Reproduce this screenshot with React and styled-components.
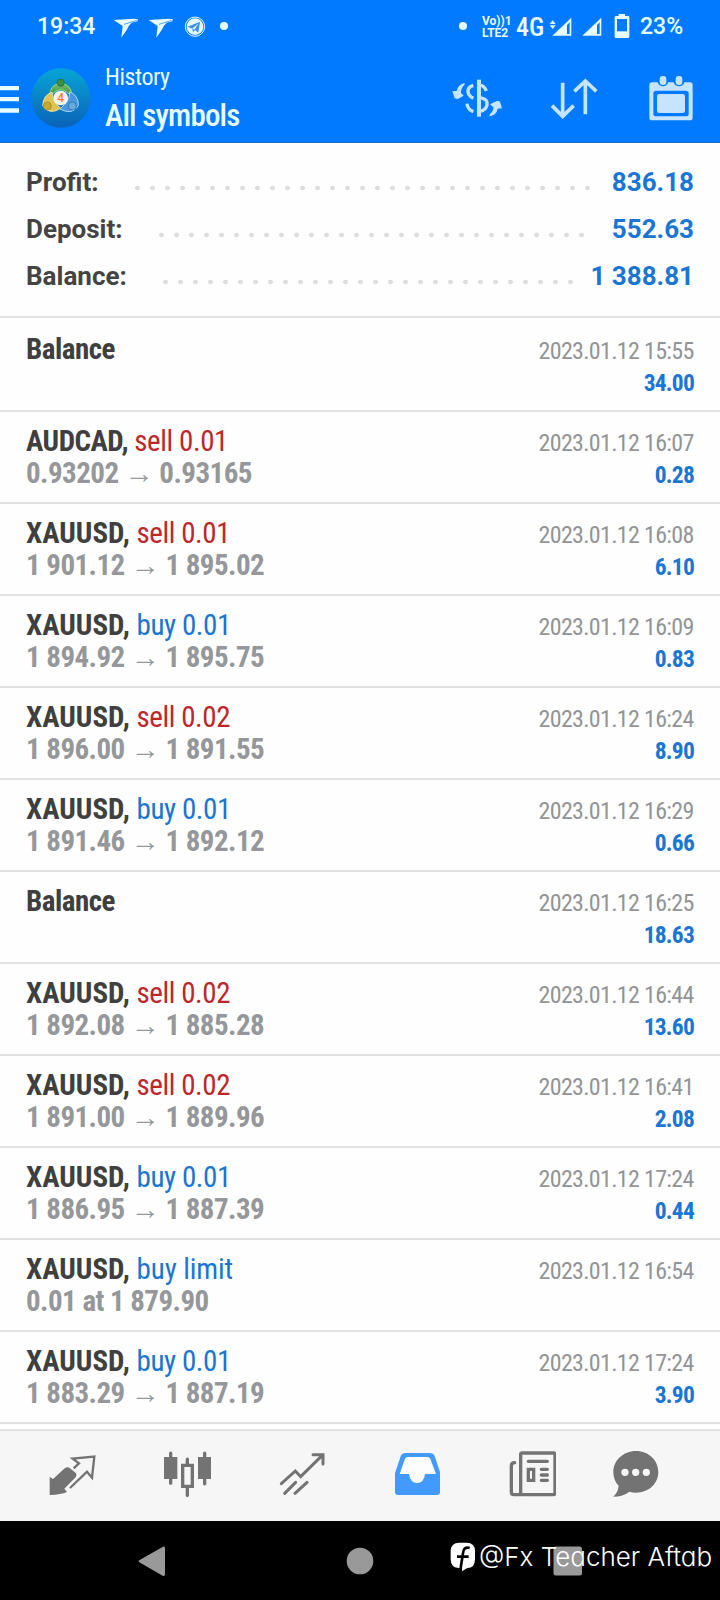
import React from "react";
import styled, { createGlobalStyle } from "styled-components";

const GlobalStyle = createGlobalStyle`
  * {
    box-sizing: border-box;
  }
  body {
    margin: 0;
    background: #fff;
    font-family: Roboto, sans-serif;
  }
  svg {
    display: block;
    flex: none;
  }
`;

const Screen = styled.div`
  width: 720px;
  height: 1600px;
  display: flex;
  flex-direction: column;
  overflow: hidden;
  background: #fefefe;
`;

const Header = styled.header`
  height: 143px;
  background: #017aff;
  border-bottom: 1px solid #1a70c4;
  color: #e8fbff;
`;

const StatusBar = styled.div`
  height: 54px;
  display: flex;
  align-items: center;
  padding-left: 37px;
`;

const Slot = styled.div`
  flex: none;
  width: ${(p) => p.$w}px;
  margin-left: ${(p) => p.$gap || 0}px;
  font-size: ${(p) => p.$size || 23}px;
  font-stretch: ${(p) => p.$stretch || 100}%;
  line-height: 32px;
  font-weight: 500;
  white-space: nowrap;
`;

const Volte = styled.div`
  flex: none;
  width: 28px;
  margin-left: 13px;
  font-size: 12px;
  font-weight: 700;
  line-height: 12px;
`;

const Toolbar = styled.div`
  height: 88px;
  display: flex;
  align-items: center;
`;

const Titles = styled.div`
  width: 345px;
  margin-left: 14px;
  padding-top: 3px;
  .section {
    font-size: 24px;
    line-height: 32px;
    font-stretch: 75%;
    letter-spacing: -0.45px;
  }
  .filter {
    font-size: 31px;
    line-height: 45px;
    font-weight: 480;
    font-stretch: 75%;
    letter-spacing: -0.8px;
  }
`;

const Summary = styled.section`
  height: 175px;
  padding: 15px 26px 0;
  border-bottom: 2px solid #e2e2e2;
`;

const SummaryLine = styled.div`
  height: 47px;
  display: flex;
  align-items: center;
  font-size: 26px;
  font-weight: 700;
  color: #444;
`;

const Dots = styled.div`
  width: ${(p) => p.$count * 15}px;
  height: 6px;
  margin: 12px auto 0 31px;
  background: radial-gradient(circle, #dedede 2px, transparent 2.7px) 0 0 / 15px 6px;
`;

const SummaryValue = styled.div`
  color: #1976d4;
`;

const Row = styled.article`
  height: 92px;
  flex: none;
  padding: 13px 26px 0;
  border-bottom: 2px solid #e2e2e2;
  &:first-child {
    height: 94px;
    padding-top: 15px;
  }
`;

const Line = styled.div`
  height: 32px;
  display: flex;
  justify-content: space-between;
  align-items: baseline;
  line-height: 32px;
  white-space: nowrap;
  font-stretch: 75%;
`;

const Name = styled.div`
  font-size: 29px;
  font-weight: 700;
  color: #3f3f3f;
  letter-spacing: ${(p) => (p.$tight ? "-0.5px" : "0")};
`;

const Action = styled.span`
  font-weight: 400;
  letter-spacing: ${(p) => (p.$limit ? "-0.1px" : "-0.42px")};
  color: ${(p) => (p.$sell ? "#bc282a" : "#1976d0")};
`;

const Price = styled.div`
  font-size: 29px;
  font-weight: 700;
  letter-spacing: -0.54px;
  color: #95979a;
`;

const DateText = styled.div`
  font-size: 24px;
  letter-spacing: -0.68px;
  margin-right: 0.4px;
  color: #929496;
`;

const Amount = styled.div`
  font-size: 23.5px;
  font-weight: 700;
  letter-spacing: -0.8px;
  color: #1976d4;
`;

const TabBar = styled.nav`
  height: 92px;
  margin-top: auto;
  flex: none;
  display: flex;
  gap: 67px;
  padding: 19px 0 0 48px;
  border-top: 2px solid #e2e2e2;
  background: #f6f6f6;
  svg:last-child {
    margin-left: -12px;
  }
`;

const SystemBar = styled.div`
  height: 79px;
  flex: none;
  position: relative;
  display: flex;
  align-items: center;
  background: #000;
`;

const Watermark = styled.div`
  position: absolute;
  left: 450px;
  top: 19px;
  display: flex;
  align-items: center;
  color: #fff;
  font-family: Inter, sans-serif;
  font-size: 26px;
  font-weight: 350;
  font-feature-settings: "cv11";
  line-height: 34px;
  white-space: nowrap;
  svg {
    margin-right: 3px;
  }
`;

const Bird = () => (
  <svg width="28" height="32" viewBox="336 33 84 96" fill="#e8fbff">
    <path d="M341 60 L400 56 L414 58 L412 64 L395 68 Q384 78 380 90 L364 113 L368 78 Z" />
    <path d="M372 73 L410 61" stroke="#017aff" strokeWidth="2" />
  </svg>
);

const Telegram = () => (
  <svg width="24" height="32" viewBox="550 33 72 96">
    <circle cx="586" cy="80" r="29" fill="none" stroke="#e8fbff" strokeWidth="3" />
    <circle cx="586" cy="80" r="25" fill="#e8fbff" />
    <path d="M564 80 L601 65 L596 98 L586 90 L580 97 L578 86 Z" fill="#3d8fe8" />
    <path d="M578 86 L597 70 L584 89 Z" fill="#e8fbff" />
  </svg>
);

const Dot = () => (
  <svg width="12" height="32" viewBox="0 0 12 32">
    <circle cx="6" cy="15" r="4" fill="#e8fbff" />
  </svg>
);

const Signal = ({ data }) => (
  <svg width="24" height="32" viewBox="360 33 72 96">
    <path d="M370 107 L427 53 V107 Z" fill="#e8fbff" />
    <path d="M414 75 L422 67 V102 H414 Z" fill="#017aff" />
    {data && (
      <path
        d="M362 72 L371 61 L380 72 Z M362 76 L371 87 L380 76 Z"
        fill="#e8fbff"
      />
    )}
  </svg>
);

const Battery = () => (
  <svg width="16" height="32" viewBox="551 33 48 96">
    <path d="M565 42 H584 V48 H593 Q597 48 597 52 V110 Q597 114 593 114 H557 Q553 114 553 110 V52 Q553 48 557 48 H565 Z" fill="#e8fbff" />
    <path d="M560 57 H590 V94 H560 Z" fill="#017aff" />
  </svg>
);

const Menu = () => (
  <svg width="19" height="60" viewBox="0 204 57 180" fill="#e8fbff">
    <path d="M0 258 H57 V271 H0 Z M0 291 H57 V304 H0 Z M0 325 H57 V338 H0 Z" />
  </svg>
);

const LogoDisc = styled.svg`
  margin-left: 12px;
`;

const Logo = () => (
  <LogoDisc width="60" height="60" viewBox="91 203 180 180">
    <defs>
      <linearGradient id="disc" x1="0" y1="0" x2="0" y2="1">
        <stop offset="0" stopColor="#08a4d6" />
        <stop offset="1" stopColor="#0b62b8" />
      </linearGradient>
      <linearGradient id="green" x1="0" y1="0" x2="0" y2="1">
        <stop offset="0" stopColor="#7fc070" />
        <stop offset="1" stopColor="#2e8a3e" />
      </linearGradient>
    </defs>
    <circle cx="181" cy="293" r="89" fill="url(#disc)" />
    <path
      d="M148 290 Q144 254 180 248 Q216 254 213 290 Q196 268 180 268 Q164 268 148 290 Z"
      fill="url(#green)"
      stroke="#a5d77a"
      strokeWidth="3"
    />
    <path
      d="M154 276 Q128 284 126 316 Q146 346 180 324 L168 312 Q154 296 154 276 Z"
      fill="#dfc452"
      stroke="#efe29a"
      strokeWidth="3"
    />
    <path
      d="M207 274 Q234 286 233 316 Q214 346 178 326 L192 312 Q208 296 207 274 Z"
      fill="#4a98dc"
      stroke="#a9d6f4"
      strokeWidth="3"
    />
    <circle cx="180" cy="247" r="11" fill="#3c8f3c" stroke="#1d6e3c" strokeWidth="2" />
    <circle cx="140" cy="317" r="12" fill="#c9a92c" stroke="#8a8433" strokeWidth="2" />
    <circle cx="215" cy="317" r="12" fill="#67aade" stroke="#2164a4" strokeWidth="2" />
    <circle cx="180" cy="293" r="22" fill="#f6f3ef" />
    <text x="180" y="306" fontSize="36" fontWeight="500" textAnchor="middle" fill="#ee7b3c">4</text>
  </LogoDisc>
);

const Currency = () => (
  <svg width="54" height="45" viewBox="60 225 162 135" fill="none" stroke="#c5e4ff" strokeWidth="10">
    <path d="M147 236 V347" strokeWidth="12" />
    <path d="M130 253 Q114 258 114 270 Q114 284 130 292" />
    <path d="M150 253 Q162 252 169 270 M150 290 Q174 294 171 312 Q168 328 150 331 M111 308 Q113 326 130 332" />
    <path d="M104 246 L103 253 Q92 262 93 276 L101 284 L84 294 L74 292 L67 271 L80 270 Q84 250 104 246 Z" fill="#c5e4ff" stroke="none" />
    <path d="M178 346 L180 339 Q191 330 190 319 L180 310 L202 299 L210 302 L216 322 L203 323 Q200 342 178 346 Z" fill="#c5e4ff" stroke="none" />
  </svg>
);

const Sort = () => (
  <svg width="48" height="45" viewBox="360 225 144 135" fill="none" stroke="#c5e4ff" strokeWidth="11">
    <path d="M398 245 V346 M366 314 L398 346 L431 314" />
    <path d="M466 340 V240 M433 271 L466 240 L499 271" />
  </svg>
);

const Calendar = () => (
  <svg width="46" height="45" viewBox="654 225 138 135" fill="#c5e4ff">
    <path
      fillRule="evenodd"
      d="M666 244 H683 Q687 256 699 256 Q711 256 714 244 H731 Q735 256 747 256 Q759 256 763 244 H780 Q788 244 788 252 V350 Q788 358 780 358 H666 Q658 358 658 350 V252 Q658 244 666 244 Z M679 269 Q670 269 670 277 V338 Q670 346 679 346 H767 Q776 346 776 338 V277 Q776 269 767 269 Z"
    />
    <rect x="689" y="225" width="20" height="27" rx="9" />
    <rect x="737" y="225" width="20" height="27" rx="9" />
    <rect x="681" y="279" width="84" height="57" rx="7" />
  </svg>
);

const TabIcon = ({ x, children }) => (
  <svg width="48" height="48" viewBox={`${x} 150 144 144`} fill="#737373">
    {children}
  </svg>
);

const rows = [
  { date: "15:55", amount: "34.00" },
  { symbol: "AUDCAD", side: "sell", size: "0.01", price: "0.93202 → 0.93165", date: "16:07", amount: "0.28" },
  { symbol: "XAUUSD", side: "sell", size: "0.01", price: "1 901.12 → 1 895.02", date: "16:08", amount: "6.10" },
  { symbol: "XAUUSD", side: "buy", size: "0.01", price: "1 894.92 → 1 895.75", date: "16:09", amount: "0.83" },
  { symbol: "XAUUSD", side: "sell", size: "0.02", price: "1 896.00 → 1 891.55", date: "16:24", amount: "8.90" },
  { symbol: "XAUUSD", side: "buy", size: "0.01", price: "1 891.46 → 1 892.12", date: "16:29", amount: "0.66" },
  { date: "16:25", amount: "18.63" },
  { symbol: "XAUUSD", side: "sell", size: "0.02", price: "1 892.08 → 1 885.28", date: "16:44", amount: "13.60" },
  { symbol: "XAUUSD", side: "sell", size: "0.02", price: "1 891.00 → 1 889.96", date: "16:41", amount: "2.08" },
  { symbol: "XAUUSD", side: "buy", size: "0.01", price: "1 886.95 → 1 887.39", date: "17:24", amount: "0.44" },
  { symbol: "XAUUSD", side: "buy", size: "limit", price: "0.01 at 1 879.90", date: "16:54" },
  { symbol: "XAUUSD", side: "buy", size: "0.01", price: "1 883.29 → 1 887.19", date: "17:24", amount: "3.90" },
];

const summary = [
  { label: "Profit:", value: "836.18", dots: 31 },
  { label: "Deposit:", value: "552.63", dots: 29 },
  { label: "Balance:", value: "1 388.81", dots: 28 },
];

const HistoryRow = ({ row }) => (
  <Row>
    <Line>
      <Name $tight={row.symbol !== "XAUUSD"}>
        {row.symbol ? `${row.symbol}, ` : "Balance"}
        {row.symbol && (
          <Action $sell={row.side === "sell"} $limit={row.size === "limit"}>
            {row.side} {row.size}
          </Action>
        )}
      </Name>
      <DateText>2023.01.12 {row.date}</DateText>
    </Line>
    <Line>
      {/* nbsp keeps the baseline on balance rows */}
      <Price>{row.price || "\u00a0"}</Price>
      <Amount>{row.amount}</Amount>
    </Line>
  </Row>
);

const App = () => {
  return (
    <>
      <GlobalStyle />
      <Screen>
        <Header>
          <StatusBar>
            <Slot $w={75}>19:34</Slot>
            <Slot $w={28}><Bird /></Slot>
            <Slot $w={28} $gap={7}><Bird /></Slot>
            <Slot $w={24} $gap={8}><Telegram /></Slot>
            <Slot $w={12} $gap={11}><Dot /></Slot>
            <Slot $w={12} $gap={227}><Dot /></Slot>
            <Volte>
              <div>Vo))1</div>
              <div>LTE2</div>
            </Volte>
            <Slot $w={30} $gap={6} $size={26} $stretch={85}>4G</Slot>
            <Slot $w={24} $gap={3}><Signal data /></Slot>
            <Slot $w={24} $gap={6}><Signal /></Slot>
            <Slot $w={16} $gap={11}><Battery /></Slot>
            <Slot $w={50} $gap={10} $stretch={95}>23%</Slot>
          </StatusBar>
          <Toolbar>
            <Menu />
            <Logo />
            <Titles>
              <div className="section">History</div>
              <div className="filter">All symbols</div>
            </Titles>
            <Slot $w={54}><Currency /></Slot>
            <Slot $w={48} $gap={46}><Sort /></Slot>
            <Slot $w={46} $gap={50}><Calendar /></Slot>
          </Toolbar>
        </Header>

        <Summary>
          {summary.map((item) => (
            <SummaryLine key={item.label}>
              <div>{item.label}</div>
              <Dots $count={item.dots} />
              <SummaryValue>{item.value}</SummaryValue>
            </SummaryLine>
          ))}
        </Summary>

        <main>
          {rows.map((row, i) => (
            <HistoryRow key={i} row={row} />
          ))}
        </main>

        <TabBar>
          <TabIcon x={145}>
            <path d="M150 231 L160 237 L196 204 Q205 199 211 205 L229 220 Q233 226 228 232 L194 266 L202 276 Q185 284 150 285 Z" />
            <path
              d="M222 205 L238 190 L219 176 L284 170 L277 233 L262 215 L211 264"
              fill="none"
              stroke="#737373"
              strokeWidth="7"
            />
          </TabIcon>
          <TabIcon x={489}>
            <path d="M507 158 Q512 151 517 158 V171 H532 V237 H517 V251 Q512 258 507 251 V237 H492 V171 H507 Z" />
            <path d="M609 158 Q614 151 619 158 V171 H633 V237 H619 V253 Q614 260 609 253 V237 H594 V171 H609 Z" />
            <path
              fillRule="evenodd"
              d="M557 176 Q562 169 567 176 V191 H582 V264 H567 V288 Q562 295 557 288 V264 H543 V191 H557 Z M553 201 V254 H572 V201 Z"
            />
          </TabIcon>
          <TabIcon x={834}>
            <path
              d="M844 251 L886 213 L902 230 L966 167 M939 164 H969 V192 M854 280 L887 247 M885 280 L921 247"
              fill="none"
              stroke="#737373"
              strokeWidth="9"
              strokeLinecap="round"
            />
          </TabIcon>
          <TabIcon x={99}>
            <path
              fill="#fdfdfd"
              d="M119 222 L137 171 H206 L228 222 H195 Q192 249 171 249 Q151 249 147 222 Z"
            />
            <path
              fill="#429aff"
              fillRule="evenodd"
              d="M105 220 L122 169 Q126 159 137 159 H209 Q220 159 224 169 L240 216 V276 Q240 285 231 285 H114 Q105 285 105 276 Z M119 222 H147 Q151 249 171 249 Q192 249 195 222 H228 L211 176 Q208 171 202 171 H143 Q137 171 135 176 Z"
            />
          </TabIcon>
          <TabIcon x={444}>
            <g fill="none" stroke="#737373" strokeWidth="10" strokeLinecap="round">
              <rect x="482" y="159" width="103" height="125" rx="5" />
              <path d="M464 188 Q454 188 454 198 V276 Q454 284 462 284 H482" />
              <path d="M505 184 H562 M544 208 H562 M544 225 H562 M544 241 H562" />
              <path d="M505 208 H521 V241 H505 Z" />
            </g>
          </TabIcon>
          <TabIcon x={754}>
            <path
              fillRule="evenodd"
              d="M829 153 C868 153 896 182 896 216 C896 252 866 278 829 278 Q818 278 809 275 Q790 290 761 290 Q775 277 777 258 Q761 240 761 216 C761 182 790 153 829 153 Z M796 206 A11 11 0 1 0 796 228 A11 11 0 1 0 796 206 Z M828 206 A11 11 0 1 0 828 228 A11 11 0 1 0 828 206 Z M860 206 A11 11 0 1 0 860 228 A11 11 0 1 0 860 206 Z"
            />
          </TabIcon>
        </TabBar>

        <SystemBar>
          <Slot $w={28} $gap={138}>
            <svg width="28" height="32" viewBox="414 433 84 96">
              <path d="M419 478 L489 438 Q495 436 495 442 V521 Q495 528 488 525 L418 485 Q413 481 419 478 Z" fill="#999" />
            </svg>
          </Slot>
          <Slot $w={28} $gap={180}>
            <svg width="28" height="32" viewBox="0 0 28 32">
              <circle cx="14" cy="16" r="13.3" fill="#999" />
            </svg>
          </Slot>
          <Slot $w={30} $gap={179}>
            <svg width="30" height="32" viewBox="0 0 30 32">
              <rect x="0.5" y="1.5" width="28.5" height="29" rx="2.5" fill="#999" />
            </svg>
          </Slot>
          <Watermark>
            <svg width="26" height="30" viewBox="270 429 78 90">
              <path
                d="M298 431 H320 Q345 431 345 457 V481 Q345 507 322 507 L306 517 V507 H298 Q272 507 272 481 V457 Q272 431 298 431 Z"
                fill="#fff"
              />
              <path d="M329 447 Q311 442 309 462 L302 507 M291 473 H326" fill="none" stroke="#000" strokeWidth="8" />
            </svg>
            @Fx Teacher Aftab
          </Watermark>
        </SystemBar>
      </Screen>
    </>
  );
};

export default App;
